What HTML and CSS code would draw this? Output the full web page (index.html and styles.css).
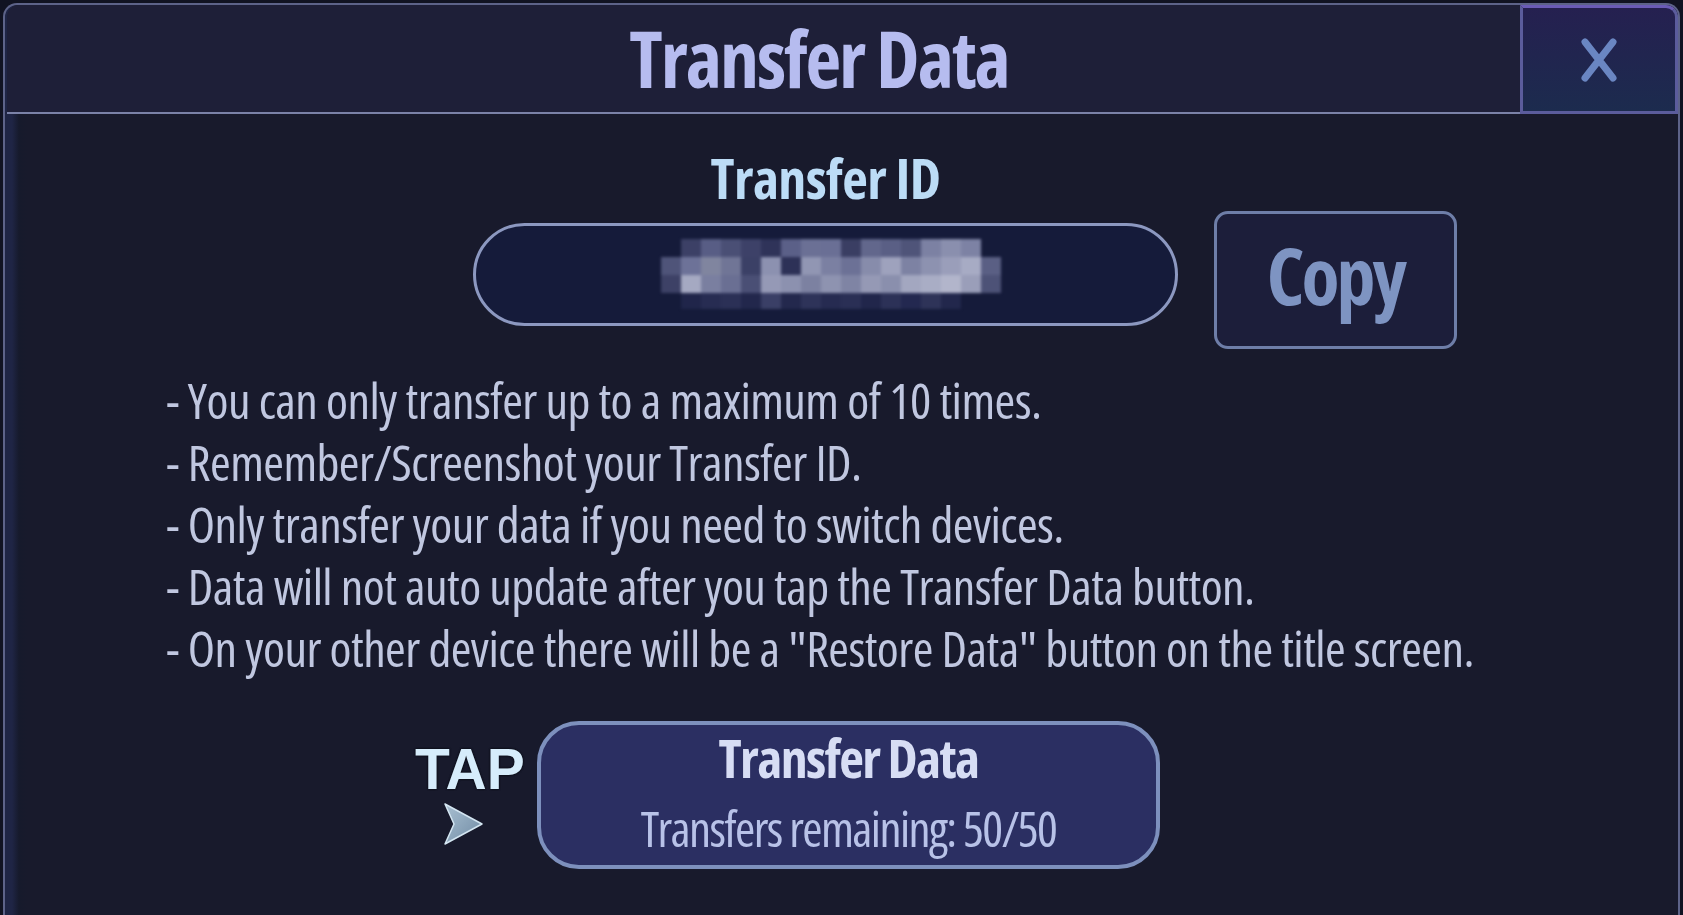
FILE: index.html
```html
<!DOCTYPE html>
<html lang="en">
<head>
    <meta charset="UTF-8">
    <meta name="viewport" content="width=device-width, initial-scale=1.0">
    <title>Transfer Data</title>

    <link rel="stylesheet" href="styles.css">

</head>
<body>

    <div class="panel">

        <div class="panel-header">
            <h1 class="panel-title">Transfer Data</h1>
            <button class="close-btn" aria-label="Close">
                <svg width="40" height="44" viewBox="0 0 40 44">
                    <path d="M6 4 L34 40 M34 4 L6 40" stroke="#6a86c2" stroke-width="7" stroke-linecap="round" fill="none"/>
                </svg>
            </button>
        </div>

        <div class="panel-body">

            <div class="id-block">
                <div class="id-label">Transfer ID</div>
                <div class="id-row">
                    <div class="id-field">
                        <!-- pixelated (hidden) id -->
                        <svg class="id-blur" width="340" height="72" viewBox="0 0 340 72">
                            <g>
                                <rect x="20" y="0" width="20" height="18" fill="#3c4066"/>
                                <rect x="40" y="0" width="20" height="18" fill="#585d85"/>
                                <rect x="60" y="0" width="20" height="18" fill="#4a4f75"/>
                                <rect x="80" y="0" width="20" height="18" fill="#3d4168"/>
                                <rect x="100" y="0" width="20" height="18" fill="#2f3359"/>
                                <rect x="120" y="0" width="20" height="18" fill="#5b6088"/>
                                <rect x="140" y="0" width="20" height="18" fill="#6b7095"/>
                                <rect x="160" y="0" width="20" height="18" fill="#6a6f95"/>
                                <rect x="180" y="0" width="20" height="18" fill="#3a3e63"/>
                                <rect x="200" y="0" width="20" height="18" fill="#62678c"/>
                                <rect x="220" y="0" width="20" height="18" fill="#5a5f85"/>
                                <rect x="240" y="0" width="20" height="18" fill="#4f5479"/>
                                <rect x="260" y="0" width="20" height="18" fill="#7c81a3"/>
                                <rect x="280" y="0" width="20" height="18" fill="#8a8fae"/>
                                <rect x="300" y="0" width="20" height="18" fill="#7d82a4"/>
                            </g>
                            <g>
                                <rect x="0" y="18" width="20" height="18" fill="#4f5479"/>
                                <rect x="20" y="18" width="20" height="18" fill="#6d7298"/>
                                <rect x="40" y="18" width="20" height="18" fill="#80859f"/>
                                <rect x="60" y="18" width="20" height="18" fill="#707596"/>
                                <rect x="80" y="18" width="20" height="18" fill="#3b4066"/>
                                <rect x="100" y="18" width="20" height="18" fill="#8c91b0"/>
                                <rect x="120" y="18" width="20" height="18" fill="#2d3157"/>
                                <rect x="140" y="18" width="20" height="18" fill="#9196b3"/>
                                <rect x="160" y="18" width="20" height="18" fill="#7b80a2"/>
                                <rect x="180" y="18" width="20" height="18" fill="#6c7196"/>
                                <rect x="200" y="18" width="20" height="18" fill="#878cab"/>
                                <rect x="220" y="18" width="20" height="18" fill="#9ea2bd"/>
                                <rect x="240" y="18" width="20" height="18" fill="#7d82a3"/>
                                <rect x="260" y="18" width="20" height="18" fill="#8d92b0"/>
                                <rect x="280" y="18" width="20" height="18" fill="#9a9eba"/>
                                <rect x="300" y="18" width="20" height="18" fill="#a7abc4"/>
                                <rect x="320" y="18" width="20" height="18" fill="#5a5f84"/>
                            </g>
                            <g>
                                <rect x="0" y="36" width="20" height="18" fill="#3d4166"/>
                                <rect x="20" y="36" width="20" height="18" fill="#a5a9c2"/>
                                <rect x="40" y="36" width="20" height="18" fill="#7a7fa0"/>
                                <rect x="60" y="36" width="20" height="18" fill="#6a6f93"/>
                                <rect x="80" y="36" width="20" height="18" fill="#4a4f75"/>
                                <rect x="100" y="36" width="20" height="18" fill="#9599b6"/>
                                <rect x="120" y="36" width="20" height="18" fill="#8c91af"/>
                                <rect x="140" y="36" width="20" height="18" fill="#7c81a1"/>
                                <rect x="160" y="36" width="20" height="18" fill="#8e93b0"/>
                                <rect x="180" y="36" width="20" height="18" fill="#7f84a4"/>
                                <rect x="200" y="36" width="20" height="18" fill="#9599b5"/>
                                <rect x="220" y="36" width="20" height="18" fill="#8a8fad"/>
                                <rect x="240" y="36" width="20" height="18" fill="#a3a7c0"/>
                                <rect x="260" y="36" width="20" height="18" fill="#a9adc5"/>
                                <rect x="280" y="36" width="20" height="18" fill="#b2b5cb"/>
                                <rect x="300" y="36" width="20" height="18" fill="#9a9eb9"/>
                                <rect x="320" y="36" width="20" height="18" fill="#4d5277"/>
                            </g>
                            <g>
                                <rect x="20" y="54" width="20" height="16" fill="#20254a"/>
                                <rect x="40" y="54" width="20" height="16" fill="#272c52"/>
                                <rect x="60" y="54" width="20" height="16" fill="#2b3056"/>
                                <rect x="80" y="54" width="20" height="16" fill="#22274c"/>
                                <rect x="100" y="54" width="20" height="16" fill="#3a3f66"/>
                                <rect x="120" y="54" width="20" height="16" fill="#23284d"/>
                                <rect x="140" y="54" width="20" height="16" fill="#2e3359"/>
                                <rect x="160" y="54" width="20" height="16" fill="#262b51"/>
                                <rect x="180" y="54" width="20" height="16" fill="#2a2f55"/>
                                <rect x="200" y="54" width="20" height="16" fill="#21264b"/>
                                <rect x="220" y="54" width="20" height="16" fill="#2c3157"/>
                                <rect x="240" y="54" width="20" height="16" fill="#232850"/>
                                <rect x="260" y="54" width="20" height="16" fill="#2e3358"/>
                                <rect x="280" y="54" width="20" height="16" fill="#22274c"/>
                            </g>
                        </svg>
                    </div>
                    <button class="copy-btn">Copy</button>
                </div>
            </div>

            <ul class="notes">
                <li>- You can only transfer up to a maximum of 10 times.</li>
                <li>- Remember/Screenshot your Transfer ID.</li>
                <li>- Only transfer your data if you need to switch devices.</li>
                <li>- Data will not auto update after you tap the Transfer Data button.</li>
                <li>- On your other device there will be a "Restore Data" button on the title screen.</li>
            </ul>

            <div class="action-row">
                <div class="tap-hint">
                    <span class="tap-text">TAP</span>
                    <svg class="tap-arrow" width="42" height="44" viewBox="0 0 42 44">
                        <defs>
                            <linearGradient id="arrowFill" x1="0" y1="0" x2="1" y2="1">
                                <stop offset="0" stop-color="#a9c0d2"/>
                                <stop offset="1" stop-color="#6f8aa3"/>
                            </linearGradient>
                        </defs>
                        <path d="M3 2 L40 22 L3 42 L12 22 Z" fill="url(#arrowFill)" stroke="#d4e6f2" stroke-width="1.5" stroke-linejoin="round"/>
                    </svg>
                </div>
                <button class="transfer-btn">
                    <span class="transfer-title">Transfer Data</span>
                    <span class="transfer-sub">Transfers remaining: 50/50</span>
                </button>
            </div>

        </div>

    </div>

</body>
</html>
```
FILE: styles.css
```css
*
{
    margin: 0;
    padding: 0;
    box-sizing: border-box;
}

html, body
{
    height: 100%;
}

body
{
    background: #111322;
    font-family: "Open Sans", "Roboto Condensed", sans-serif;
    font-stretch: 75%;
    overflow: hidden;
}

.panel
{
    height: calc(100% - 3px);
    margin: 3px 3px 0 3px;
    border: 2px solid #5d6389;
    border-bottom: none;
    border-radius: 14px 14px 0 0;
    background: linear-gradient(to right, #1f2545 0, #1f2545 7px, #161a2c 14px, #181a2c 22px);
    display: flex;
    flex-direction: column;
}

/* header */

.panel-header
{
    display: flex;
    height: 109px;
    margin-left: 2px;
    background: #1e1f38;
    border-bottom: 2px solid #7b82a8;
    border-radius: 12px 12px 0 0;
}

.panel-title
{
    flex: 1;
    padding-left: 111px;
    text-align: center;
    font-size: 78px;
    font-weight: 700;
    letter-spacing: -2px;
    line-height: 107px;
    color: #b6bcef;
}

.close-btn
{
    width: 158px;
    margin-bottom: -2px;
    border: 3px solid #5b5c9c;
    border-top-color: #6a5bb6;
    border-radius: 0 12px 0 0;
    background: linear-gradient(to bottom, #252050, #1c2b4e);
    display: flex;
    align-items: center;
    justify-content: center;
    cursor: pointer;
}

/* body */

.panel-body
{
    flex: 1;
    padding: 35px 0 0 161px;
}

.id-block
{
    margin-left: 307px;
}

.id-label
{
    width: 705px;
    text-align: center;
    font-size: 56px;
    font-weight: 700;
    letter-spacing: -0.6px;
    line-height: 1;
    color: #bcdcf6;
}

.id-row
{
    display: flex;
    gap: 36px;
    margin-top: 6px;
}

.id-field
{
    width: 705px;
    height: 103px;
    margin-top: 12px;
    border: 3px solid #8c98c0;
    border-radius: 52px;
    background: #151b3a;
    display: flex;
    align-items: center;
    justify-content: center;
    padding-left: 10px;
}

.id-blur
{
    filter: blur(1.5px);
}

.copy-btn
{
    width: 243px;
    height: 138px;
    border: 3px solid #6e7ea8;
    border-radius: 14px;
    background: #1c1e3a;
    font-family: inherit;
    font-stretch: 75%;
    font-size: 78px;
    font-weight: 700;
    letter-spacing: -3px;
    line-height: 1;
    color: #7e94c2;
    padding-bottom: 10px;
    cursor: pointer;
}

.notes
{
    list-style: none;
    margin-top: 20px;
    font-size: 50px;
    letter-spacing: -0.55px;
    line-height: 62px;
    color: #c0c7e0;
}

/* action */

.action-row
{
    display: flex;
    gap: 16px;
    margin-top: 42px;
    margin-left: 249px;
}

.tap-hint
{
    width: 106px;
    padding-top: 20px;
    display: flex;
    flex-direction: column;
}

.tap-text
{
    font-family: "Liberation Sans", Arial, sans-serif;
    font-stretch: normal;
    font-size: 57px;
    font-weight: 700;
    line-height: 1;
    color: #d6ecfb;
    text-shadow: 0 0 2px #070912, 0 0 2px #070912;
}

.tap-arrow
{
    margin: 4px 0 0 27px;
}

.transfer-btn
{
    width: 623px;
    height: 148px;
    border: 4px solid #7d90bd;
    border-radius: 42px;
    background: #2b2f62;
    display: flex;
    flex-direction: column;
    align-items: center;
    padding-top: 1px;
    font-family: inherit;
    font-stretch: 75%;
    cursor: pointer;
}

.transfer-title
{
    font-size: 54px;
    font-weight: 700;
    letter-spacing: -1.6px;
    line-height: 62px;
    color: #d7ddf4;
}

.transfer-sub
{
    margin-top: 11px;
    font-size: 49px;
    letter-spacing: -1.6px;
    line-height: 58px;
    color: #b8c2e8;
}
```
